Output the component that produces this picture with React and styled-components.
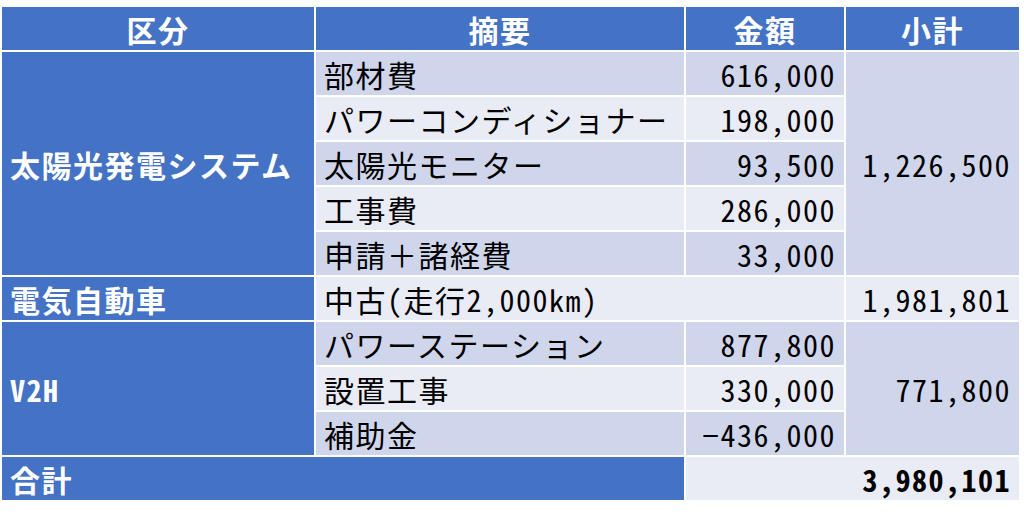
import React from 'react';
import styled, { createGlobalStyle } from 'styled-components';

const GlobalStyle = createGlobalStyle`
  html, body {
    margin: 0;
    padding: 0;
    background: #ffffff;
  }
  body {
    font-family: "Noto Sans CJK JP", "Noto Sans", sans-serif;
  }
`;

const BLUE = '#4472C4';
const DARK = '#CFD5EA';
const LIGHT = '#E9EBF5';

const Wrapper = styled.div`
  padding-top: 5px;
`;

const Table = styled.table`
  width: 1021px;
  table-layout: fixed;
  border-collapse: separate;
  border-spacing: 2px;
  font-size: 30px;
  line-height: 1;
  letter-spacing: 1.5px;
  color: #000;
`;

const HeadCell = styled.th`
  height: 43px;
  padding: 0 8px;
  background: ${BLUE};
  color: #ffffff;
  font-weight: 700;
  text-align: center;
  white-space: nowrap;
`;

const GroupCell = styled.td`
  height: 43px;
  padding: 0 8px;
  background: ${BLUE};
  color: #ffffff;
  font-weight: 700;
  text-align: left;
  white-space: nowrap;
  font-feature-settings: ${p => (p.$half ? '"hwid" 1' : 'normal')};
`;

const ItemCell = styled.td`
  height: 43px;
  padding: 0 8px;
  background: ${p => (p.$dark ? DARK : LIGHT)};
  white-space: nowrap;
  font-feature-settings: ${p => (p.$half ? '"hwid" 1' : 'normal')};
`;

const AmountCell = styled.td`
  height: 43px;
  padding: 0 8px;
  background: ${p => (p.$dark ? DARK : LIGHT)};
  text-align: right;
  white-space: nowrap;
  font-weight: ${p => (p.$bold ? 700 : 400)};
  font-feature-settings: "hwid" 1;
`;

const solar = [
  ['部材費', '616,000'],
  ['パワーコンディショナー', '198,000'],
  ['太陽光モニター', '93,500'],
  ['工事費', '286,000'],
  ['申請＋諸経費', '33,000'],
];

const v2h = [
  ['パワーステーション', '877,800'],
  ['設置工事', '330,000'],
  ['補助金', '−436,000'],
];

export default function App() {
  return (
    <>
      <GlobalStyle />
      <Wrapper>
        <Table>
          <colgroup>
            <col style={{ width: 312 }} />
            <col style={{ width: 368 }} />
            <col style={{ width: 158 }} />
            <col style={{ width: 173 }} />
          </colgroup>
          <thead>
            <tr>
              <HeadCell>区分</HeadCell>
              <HeadCell>摘要</HeadCell>
              <HeadCell>金額</HeadCell>
              <HeadCell>小計</HeadCell>
            </tr>
          </thead>
          <tbody>
            {solar.map(([name, amount], i) => (
              <tr key={name}>
                {i === 0 && <GroupCell rowSpan={5}>太陽光発電システム</GroupCell>}
                <ItemCell $dark={i % 2 === 0}>{name}</ItemCell>
                <AmountCell $dark={i % 2 === 0}>{amount}</AmountCell>
                {i === 0 && <AmountCell rowSpan={5} $dark>1,226,500</AmountCell>}
              </tr>
            ))}
            <tr>
              <GroupCell>電気自動車</GroupCell>
              <ItemCell colSpan={2} $half>中古(走行2,000km)</ItemCell>
              <AmountCell>1,981,801</AmountCell>
            </tr>
            {v2h.map(([name, amount], i) => (
              <tr key={name}>
                {i === 0 && <GroupCell rowSpan={3} $half>V2H</GroupCell>}
                <ItemCell $dark={i % 2 === 0}>{name}</ItemCell>
                <AmountCell $dark={i % 2 === 0}>{amount}</AmountCell>
                {i === 0 && <AmountCell rowSpan={3} $dark>771,800</AmountCell>}
              </tr>
            ))}
            <tr>
              <GroupCell colSpan={2}>合計</GroupCell>
              <AmountCell colSpan={2} $bold>3,980,101</AmountCell>
            </tr>
          </tbody>
        </Table>
      </Wrapper>
    </>
  );
}
